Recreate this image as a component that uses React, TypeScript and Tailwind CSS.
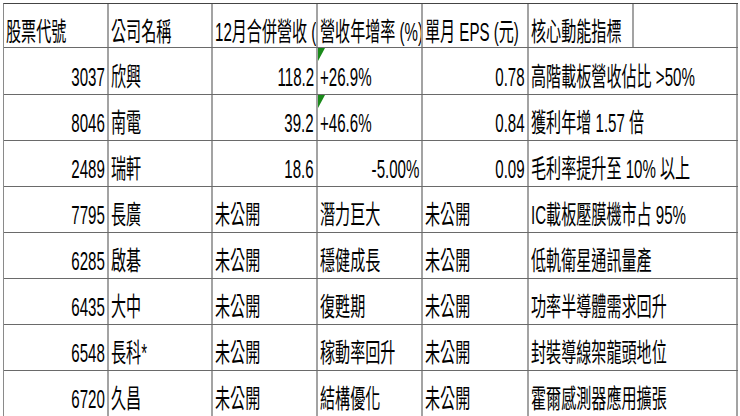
import React from "react";
import clsx from "clsx";

type Row = {
  code: string;
  name: string;
  rev: string;
  revRight: boolean;
  yoy: string;
  yoyRight: boolean;
  tri: boolean;
  eps: string;
  epsRight: boolean;
  note: string;
};

const rows: Row[] = [
  { code: "3037", name: "欣興", rev: "118.2", revRight: true, yoy: "+26.9%", yoyRight: false, tri: true, eps: "0.78", epsRight: true, note: "高階載板營收佔比 >50%" },
  { code: "8046", name: "南電", rev: "39.2", revRight: true, yoy: "+46.6%", yoyRight: false, tri: true, eps: "0.84", epsRight: true, note: "獲利年增 1.57 倍" },
  { code: "2489", name: "瑞軒", rev: "18.6", revRight: true, yoy: "-5.00%", yoyRight: true, tri: false, eps: "0.09", epsRight: true, note: "毛利率提升至 10% 以上" },
  { code: "7795", name: "長廣", rev: "未公開", revRight: false, yoy: "潛力巨大", yoyRight: false, tri: false, eps: "未公開", epsRight: false, note: "IC載板壓膜機市占 95%" },
  { code: "6285", name: "啟碁", rev: "未公開", revRight: false, yoy: "穩健成長", yoyRight: false, tri: false, eps: "未公開", epsRight: false, note: "低軌衛星通訊量產" },
  { code: "6435", name: "大中", rev: "未公開", revRight: false, yoy: "復甦期", yoyRight: false, tri: false, eps: "未公開", epsRight: false, note: "功率半導體需求回升" },
  { code: "6548", name: "長科*", rev: "未公開", revRight: false, yoy: "稼動率回升", yoyRight: false, tri: false, eps: "未公開", epsRight: false, note: "封裝導線架龍頭地位" },
  { code: "6720", name: "久昌", rev: "未公開", revRight: false, yoy: "結構優化", yoyRight: false, tri: false, eps: "未公開", epsRight: false, note: "霍爾感測器應用擴張" },
];

function Cell({
  children,
  right,
  span2,
  tri,
  header,
}: {
  children?: React.ReactNode;
  right?: boolean;
  span2?: boolean;
  tri?: boolean;
  header?: boolean;
}) {
  return (
    <div
      className={clsx(
        "relative flex items-end overflow-hidden whitespace-nowrap border-r-2 border-[#a3a3a3]",
        right ? "justify-end pr-[2px]" : "justify-start pl-[2px]",
        header ? "pb-[2px]" : "pb-[4px]",
        span2 && "col-span-2"
      )}
    >
      {tri && (
        <svg className="absolute left-0 top-0" width="7" height="13" viewBox="0 0 7 13">
          <polygon points="0,0 7,0 0,13" fill="#1a8a1a" />
        </svg>
      )}
      {children !== undefined && (
        <span
          className={clsx(
            "inline-block text-[26px] leading-none scale-x-[0.58] text-black",
            right ? "origin-right" : "origin-left"
          )}
        >
          {children}
        </span>
      )}
    </div>
  );
}

const grid =
  "grid grid-cols-[105px_104px_105px_105px_106px_105px_104px] border-b border-[#6a6a6a]";

export default function App() {
  return (
    <div className="w-[740px] h-[416px] overflow-hidden bg-white pl-[3px] pt-[3px] font-['Liberation_Sans','Noto_Sans_CJK_TC',sans-serif]">
      <div className="w-[735px] border-l border-t border-l-[#8a8a8a] border-t-[#444444]">
        <div className={clsx(grid, "h-[44px]")}>
          <Cell header>股票代號</Cell>
          <Cell header>公司名稱</Cell>
          <Cell header>12月合併營收 (億元)</Cell>
          <Cell header>營收年增率 (%)</Cell>
          <Cell header>單月 EPS (元)</Cell>
          <Cell header>核心動能指標</Cell>
          <Cell header />
        </div>
        {rows.map((r, i) => (
          <div key={r.code} className={clsx(grid, i === 0 ? "h-[47px]" : "h-[46px]")}>
            <Cell right>{r.code}</Cell>
            <Cell>{r.name}</Cell>
            <Cell right={r.revRight}>{r.rev}</Cell>
            <Cell right={r.yoyRight} tri={r.tri}>
              {r.yoy}
            </Cell>
            <Cell right={r.epsRight}>{r.eps}</Cell>
            <Cell span2>{r.note}</Cell>
          </div>
        ))}
      </div>
    </div>
  );
}
